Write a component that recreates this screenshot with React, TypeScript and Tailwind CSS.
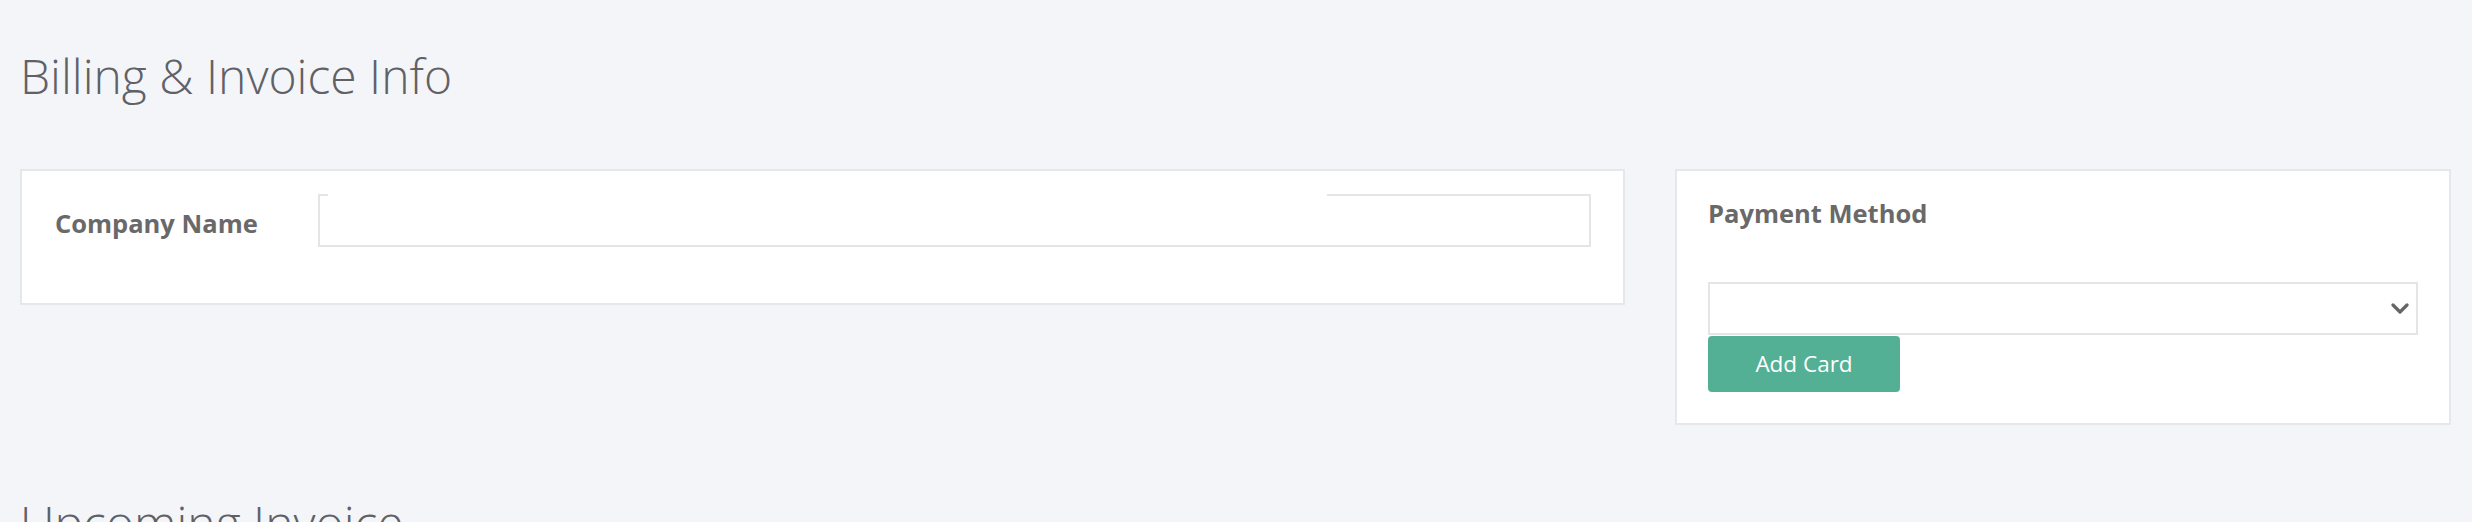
import React from 'react';

export default function App() {
  return (
    <div className="min-h-screen bg-[#f4f5f9] px-[20px] pt-[52px] font-['Open_Sans',sans-serif] text-[#666666]">
      <h1 className="text-[48px] leading-[48px] font-light text-[#5f6167]">Billing &amp; Invoice Info</h1>

      <div className="mt-[69px] flex items-start gap-[50px]">
        {/* Company */}
        <div className="w-[1605px] border-2 border-[#e6e7eb] bg-white pt-[23px] pb-[56px] pl-[33px] pr-[32px]">
          <div className="flex items-center">
            <label className="w-[263px] shrink-0 pt-[4px] text-[25.5px] font-bold leading-[26px] text-[#696969]">Company Name</label>
            <div className="flex flex-1 flex-col">
              <div className="h-[2px] bg-[linear-gradient(to_right,#e5e5e5_10px,transparent_10px,transparent_1009px,#e5e5e5_1009px)]" />
              <input type="text" className="h-[51px] w-full border-2 border-t-0 border-[#e5e5e5] bg-white px-3 outline-none" />
            </div>
          </div>
        </div>

        {/* Payment */}
        <div className="w-[776px] border-2 border-[#e6e7eb] bg-white pt-[29px] pb-[31px] pl-[31px] pr-[31px]">
          <h4 className="text-[25.5px] font-bold leading-[26px] text-[#696969]">Payment Method</h4>
          <div className="relative mt-[56px]">
            <select className="block h-[53px] w-full appearance-none border-2 border-[#e5e5e5] bg-white px-3 outline-none">
              <option value=""></option>
            </select>
            <svg className="pointer-events-none absolute right-[9px] top-[21px] h-[11px] w-[18px]" viewBox="0 0 18 11" fill="none">
              <polyline points="2,2 9,9 16,2" stroke="#666666" strokeWidth="3.2" strokeLinecap="round" strokeLinejoin="round" />
            </svg>
          </div>
          <button className="mt-px flex h-[56px] w-[192px] items-center justify-center rounded-[4px] bg-[#53b094] text-[22.5px] leading-none text-white">
            Add Card
          </button>
        </div>
      </div>

      <h2 className="mt-[74px] text-[48px] leading-[48px] font-light text-[#5f6167]">Upcoming Invoice</h2>
    </div>
  );
}
